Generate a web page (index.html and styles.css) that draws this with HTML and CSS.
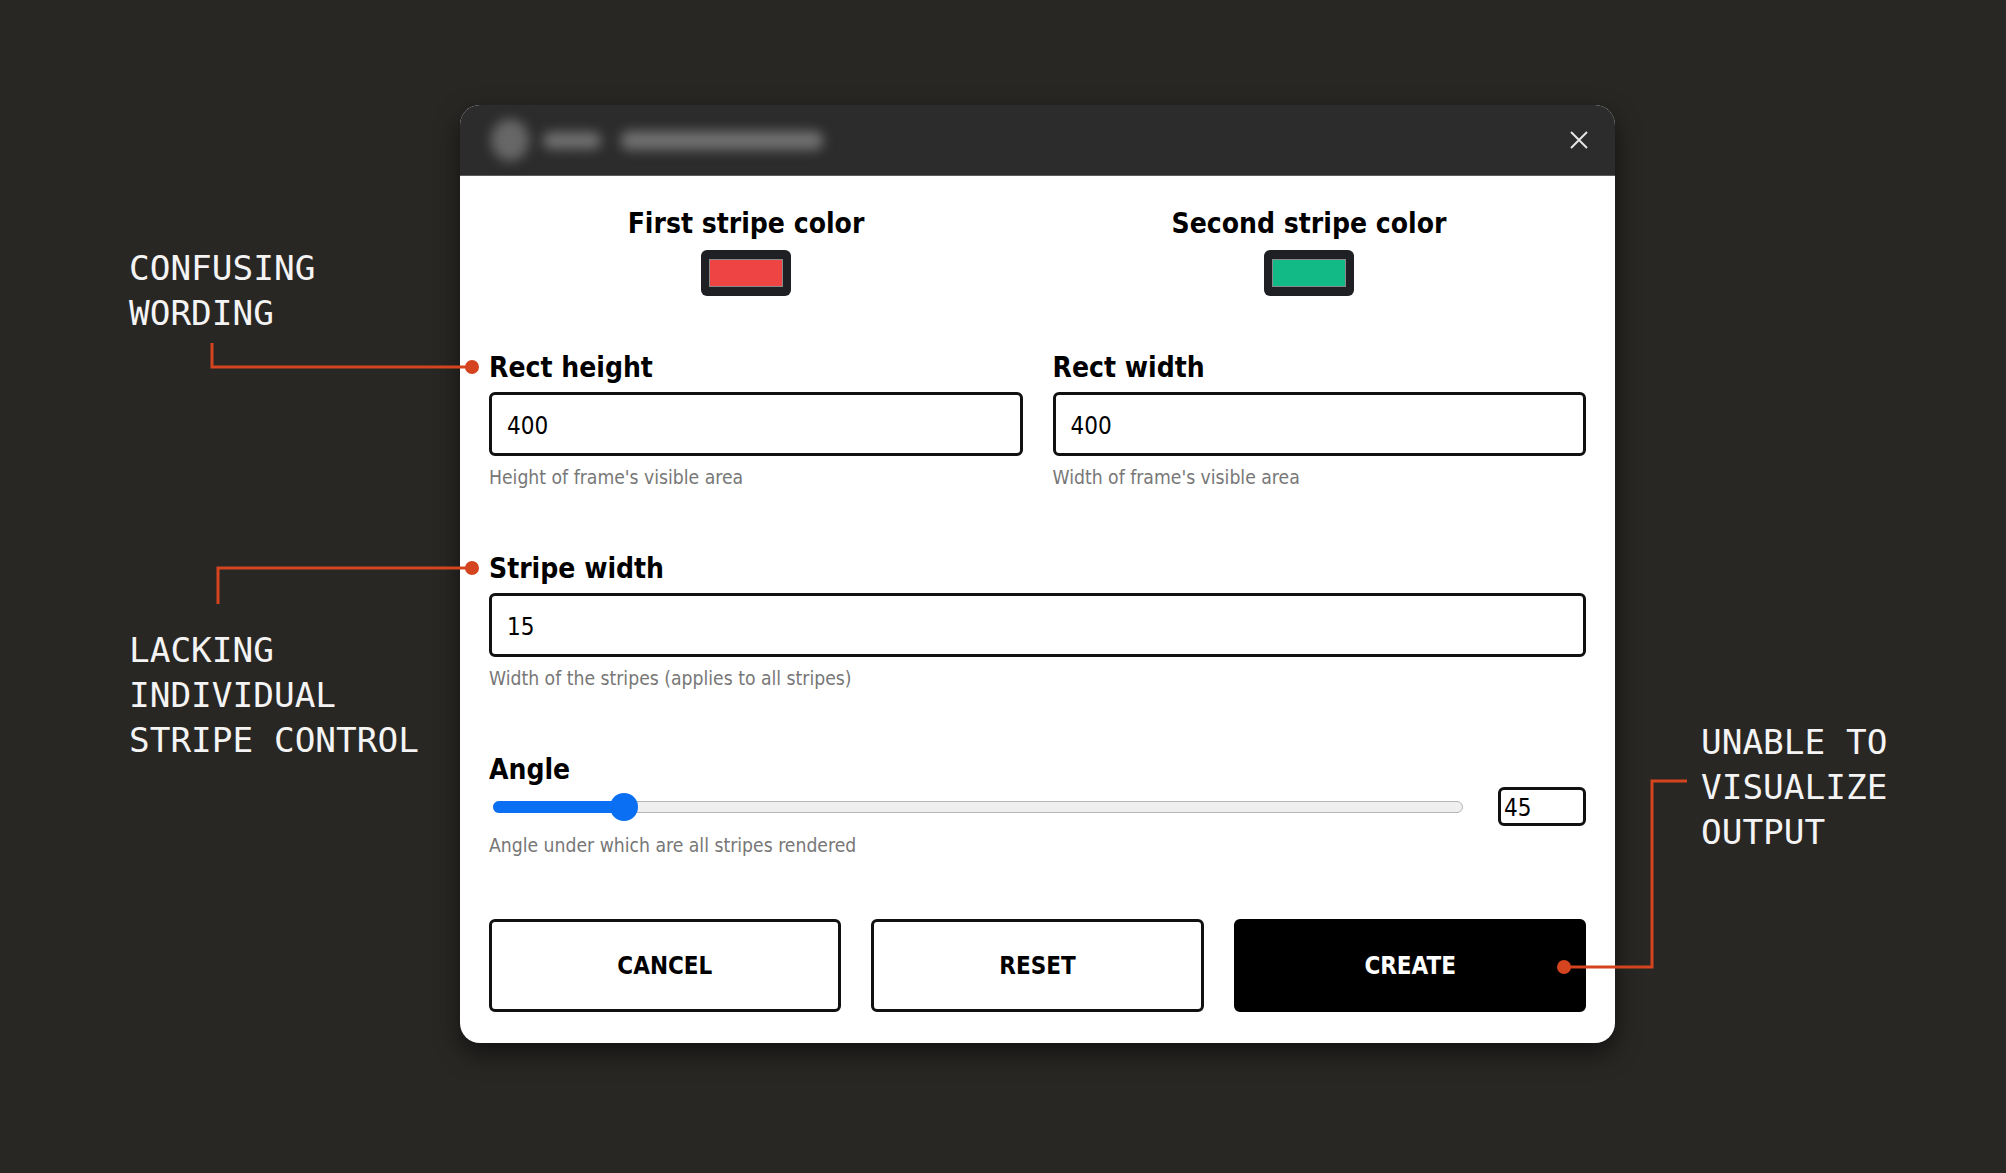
FILE: index.html
```html
<!DOCTYPE html>
<html lang="en">
<head>
    <meta charset="UTF-8">
    <title>Striped background dialog</title>
    <link rel="stylesheet" href="styles.css">
</head>
<body>

    <!-- Dialog -->
    <div class="stage">
        <div class="dialog">
            <div class="titlebar">
                <div class="app-blur">
                    <span class="blur-icon"></span>
                    <span class="blur-word short"></span>
                    <span class="blur-word long"></span>
                </div>
                <svg class="close" width="20" height="20" viewBox="0 0 20 20">
                    <path d="M2 2 L18 18 M18 2 L2 18" stroke="#e6e6e6" stroke-width="2" fill="none"/>
                </svg>
            </div>

            <div class="dialog-body">
                <div class="colors">
                    <div class="color-field">
                        <div class="label">First stripe color</div>
                        <div class="swatch"><span class="swatch-fill red"></span></div>
                    </div>
                    <div class="color-field">
                        <div class="label">Second stripe color</div>
                        <div class="swatch"><span class="swatch-fill green"></span></div>
                    </div>
                </div>

                <div class="row-two">
                    <div class="field">
                        <label class="label">Rect height</label>
                        <input class="text-input" type="text" value="400">
                        <div class="help">Height of frame's visible area</div>
                    </div>
                    <div class="field">
                        <label class="label">Rect width</label>
                        <input class="text-input" type="text" value="400">
                        <div class="help">Width of frame's visible area</div>
                    </div>
                </div>

                <div class="field">
                    <label class="label">Stripe width</label>
                    <input class="text-input" type="text" value="15">
                    <div class="help">Width of the stripes (applies to all stripes)</div>
                </div>

                <div class="field field-angle">
                    <label class="label">Angle</label>
                    <div class="slider-row">
                        <div class="slider">
                            <div class="slider-fill" style="width: 13.5%"><span class="thumb"></span></div>
                        </div>
                        <input class="num-input" type="text" value="45">
                    </div>
                    <div class="help">Angle under which are all stripes rendered</div>
                </div>

                <div class="actions">
                    <button class="btn">CANCEL</button>
                    <button class="btn">RESET</button>
                    <button class="btn btn-primary">CREATE</button>
                </div>
            </div>
        </div>
    </div>

    <!-- Annotations -->
    <div class="note note-wording">CONFUSING<br>WORDING</div>
    <div class="note note-stripes">LACKING<br>INDIVIDUAL<br>STRIPE CONTROL</div>
    <div class="note note-output">UNABLE TO<br>VISUALIZE<br>OUTPUT</div>

    <svg class="connectors" width="2006" height="1173" viewBox="0 0 2006 1173">
        <path d="M212 343 V367 H472" />
        <path d="M218 604 V568 H472" />
        <path d="M1687 781 H1652 V967 H1564" />
        <circle cx="472" cy="367" r="7" />
        <circle cx="472" cy="568" r="7" />
        <circle cx="1564" cy="967" r="7" />
    </svg>

</body>
</html>
```

FILE: styles.css
```css
/* General */
body {
    margin: 0;
    width: 2006px;
    height: 1173px;
    background: #292724;
    font-family: "DejaVu Sans Condensed", "DejaVu Sans", sans-serif;
    position: relative;
    overflow: hidden;
}

.stage {
    padding: 105px 0 0 460px;
}

/* Dialog */
.dialog {
    width: 1155px;
    background: #fff;
    border-radius: 20px;
    box-shadow: 0 10px 24px rgba(0, 0, 0, 0.55);
    overflow: hidden;
}

.titlebar {
    height: 70px;
    background: #2c2c2c;
    border-bottom: 1px solid #5a5a5a;
    display: flex;
    align-items: center;
    justify-content: space-between;
    padding: 0 26px 0 31px;
}

.app-blur {
    display: flex;
    align-items: center;
    gap: 14px;
    filter: blur(6px);
}

.blur-icon {
    width: 38px;
    height: 42px;
    border-radius: 50%;
    background: #666766;
}

.blur-word {
    height: 17px;
    border-radius: 8px;
    background: #707070;
}

.blur-word.short { width: 58px; }
.blur-word.long { width: 202px; height: 19px; margin-left: 6px; }

.close {
    display: block;
}

.dialog-body {
    padding: 31px 29px 31px 29px;
    display: flex;
    flex-direction: column;
    gap: 63px;
}

/* Labels */
.label {
    display: block;
    font-weight: bold;
    font-size: 28px;
    line-height: 34px;
    color: #000;
}

/* Colour pickers */
.colors {
    display: grid;
    grid-template-columns: 514px 514px;
    column-gap: 49px;
    margin-bottom: -8px;
}

.color-field {
    display: flex;
    flex-direction: column;
    align-items: center;
    gap: 9px;
}

.swatch {
    width: 90px;
    height: 46px;
    box-sizing: border-box;
    padding: 9px 8px;
    background: #1f2023;
    border-radius: 6px;
    display: flex;
}

.swatch-fill {
    flex: 1;
    border: 1px solid #8a8a8a;
}

.swatch-fill.red { background: #ef4444; }
.swatch-fill.green { background: #12bb85; }

/* Fields */
.row-two {
    display: grid;
    grid-template-columns: 1fr 1fr;
    column-gap: 30px;
}

.field {
    display: flex;
    flex-direction: column;
}

.field .label {
    margin-bottom: 7px;
}

.text-input {
    height: 64px;
    box-sizing: border-box;
    border: 3px solid #111;
    border-radius: 6px;
    padding: 3px 15px 0;
    font-family: inherit;
    font-size: 24px;
    color: #000;
    outline: none;
}

.help {
    margin-top: 11px;
    font-size: 19.2px;
    line-height: 22px;
    color: #777;
}

/* Angle slider */
.field-angle .label {
    margin-bottom: 0;
}

.field-angle .help {
    margin-top: 9px;
}

.slider-row {
    display: flex;
    align-items: center;
    gap: 35px;
}

.slider {
    flex: 1;
    margin-left: 4px;
    height: 12px;
    box-sizing: border-box;
    background: #efefef;
    border: 1px solid #b5b5b5;
    border-radius: 6px;
    position: relative;
}

.slider-fill {
    position: absolute;
    left: -1px;
    top: -1px;
    bottom: -1px;
    background: #0b6ff4;
    border-radius: 6px;
}

.thumb {
    position: absolute;
    right: -14px;
    top: 50%;
    width: 28px;
    height: 28px;
    margin-top: -14px;
    border-radius: 50%;
    background: #0b6ff4;
}

.num-input {
    width: 88px;
    height: 39px;
    box-sizing: border-box;
    border: 3px solid #111;
    border-radius: 6px;
    padding: 2px 3px 0;
    font-family: inherit;
    font-size: 24px;
    color: #000;
    outline: none;
}

/* Buttons */
.actions {
    display: grid;
    grid-template-columns: 351fr 333fr 351fr;
    column-gap: 30px;
    margin-top: -1px;
}

.btn {
    height: 93px;
    background: #fff;
    border: 3px solid #111;
    border-radius: 6px;
    font-family: inherit;
    font-weight: bold;
    font-size: 24px;
    color: #000;
}

.btn-primary {
    background: #000;
    border-color: #000;
    color: #fff;
}

/* Annotations */
.note {
    position: absolute;
    font-family: "DejaVu Sans Mono", "Liberation Mono", monospace;
    font-size: 34.4px;
    line-height: 45px;
    color: #f4f4f4;
}

.note-wording { left: 129px; top: 246px; }
.note-stripes { left: 129px; top: 628px; }
.note-output { left: 1701px; top: 720px; }

.connectors {
    position: absolute;
    left: 0;
    top: 0;
    pointer-events: none;
}

.connectors path {
    fill: none;
    stroke: #d4441f;
    stroke-width: 3;
}

.connectors circle {
    fill: #d4441f;
}
```
